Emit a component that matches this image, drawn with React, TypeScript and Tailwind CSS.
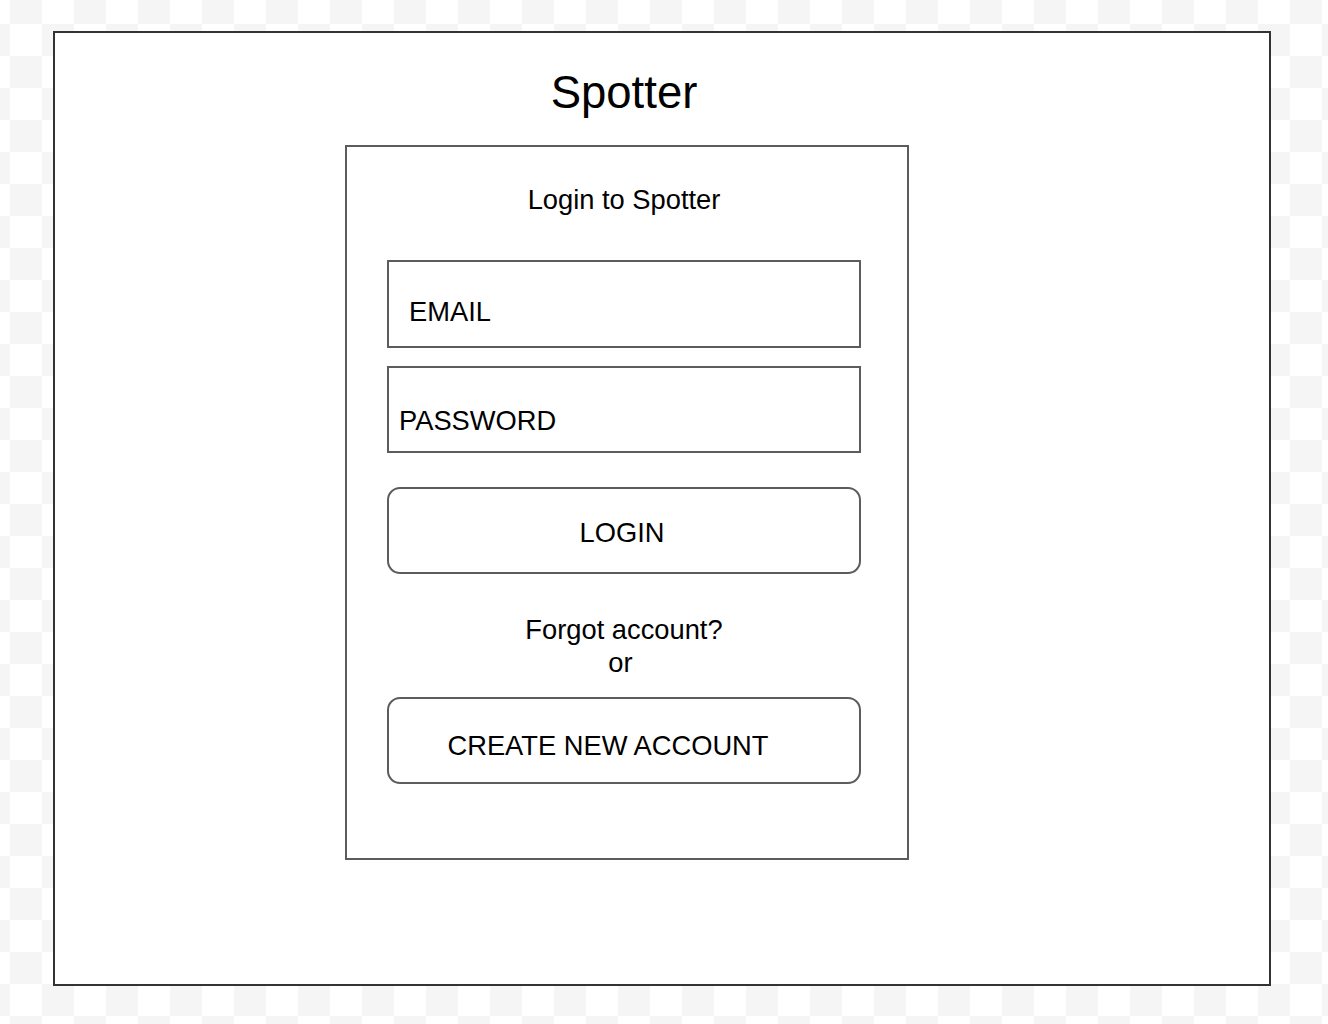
export default function App() {
  return (
    <div
      className="w-[1328px] h-[1024px] pt-[31px] pl-[53px] bg-[conic-gradient(#f5f5f5_25%,#ffffff_0_50%,#f5f5f5_0_75%,#ffffff_0)] bg-[length:64px_64px] bg-[position:10px_24px] text-black"
      style={{ fontFamily: '"Liberation Sans", Arial, sans-serif' }}
    >
      <div className="w-[1218px] h-[955px] border-2 border-[#333333] bg-white">
        <div className="ml-[290px] w-[564px] flex flex-col">
          <div className="mt-[38px] h-[44px] leading-[44px] text-[45.5px] text-center pr-[6px]">Spotter</div>
          <div className="mt-[30px] h-[715px] border-2 border-[#5c5c5c] flex flex-col">
            <div className="ml-[40px] w-[474px] flex flex-col">
              <div className="mt-[39px] h-[27px] leading-[27px] text-[27.3px] text-center">Login to Spotter</div>
              <div className="mt-[47px] h-[88px] border-2 border-[#5c5c5c] flex items-center pl-[20px] pt-[16px] leading-none text-[27.3px]">
                EMAIL
              </div>
              <div className="mt-[18px] h-[87px] border-2 border-[#5c5c5c] flex items-center pl-[10px] pt-[23px] leading-none text-[27.3px]">
                PASSWORD
              </div>
              <div className="mt-[34px] h-[87px] border-2 border-[#5c5c5c] rounded-[13px] flex items-center justify-center pr-[4px] pt-[5px] leading-none text-[27.3px]">
                LOGIN
              </div>
              <div className="mt-[39px] leading-[33px] text-[27.3px] text-center">
                <div>Forgot account?</div>
                <div className="pr-[7px]">or</div>
              </div>
              <div className="mt-[18px] h-[87px] border-2 border-[#5c5c5c] rounded-[13px] flex items-center justify-center pr-[32px] pt-[11px] leading-none text-[27.3px]">
                CREATE NEW ACCOUNT
              </div>
            </div>
          </div>
        </div>
      </div>
    </div>
  );
}
